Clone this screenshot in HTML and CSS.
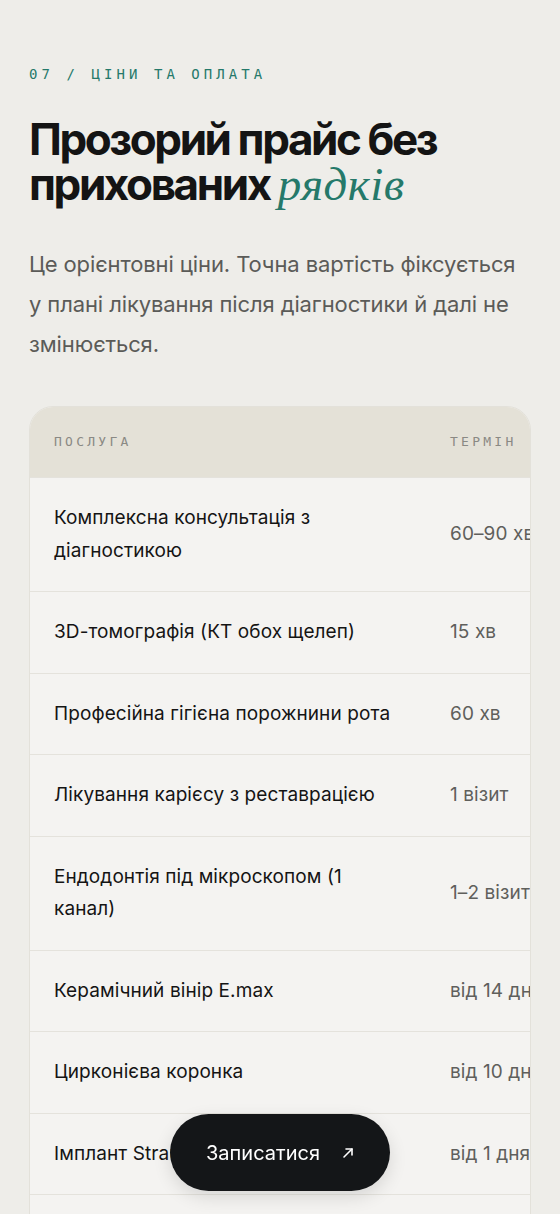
FILE: index.html
```html
<!DOCTYPE html>
<html lang="uk">
<head>
    <meta charset="UTF-8">
    <meta name="viewport" content="width=device-width, initial-scale=1.0">
    <title>Ціни та оплата</title>
    <link rel="stylesheet" href="styles.css">
</head>
<body>

    <section class="prices">
        <p class="eyebrow">07 / Ціни та оплата</p>
        <h2 class="title">Прозорий прайс без прихованих <em>рядків</em></h2>
        <p class="lead">Це орієнтовні ціни. Точна вартість фіксується у плані лікування після діагностики й далі не змінюється.</p>

        <div class="price-card">
            <table class="price-table">
                <thead>
                    <tr>
                        <th class="col-service">Послуга</th>
                        <th class="col-term">Термін</th>
                        <th class="col-price">Вартість</th>
                    </tr>
                </thead>
                <tbody>
                    <tr>
                        <td>Комплексна консультація з діагностикою</td>
                        <td class="term">60–90 хв</td>
                        <td class="price">1 200 ₴</td>
                    </tr>
                    <tr>
                        <td>3D-томографія (КТ обох щелеп)</td>
                        <td class="term">15 хв</td>
                        <td class="price">1 500 ₴</td>
                    </tr>
                    <tr>
                        <td>Професійна гігієна порожнини рота</td>
                        <td class="term">60 хв</td>
                        <td class="price">2 400 ₴</td>
                    </tr>
                    <tr>
                        <td>Лікування карієсу з реставрацією</td>
                        <td class="term">1 візит</td>
                        <td class="price">від 2 800 ₴</td>
                    </tr>
                    <tr>
                        <td>Ендодонтія під мікроскопом (1 канал)</td>
                        <td class="term">1–2 візити</td>
                        <td class="price">від 3 500 ₴</td>
                    </tr>
                    <tr>
                        <td>Керамічний вінір E.max</td>
                        <td class="term">від 14 днів</td>
                        <td class="price">від 16 000 ₴</td>
                    </tr>
                    <tr>
                        <td>Цирконієва коронка</td>
                        <td class="term">від 10 днів</td>
                        <td class="price">від 12 000 ₴</td>
                    </tr>
                    <tr>
                        <td>Імплант Straumann під ключ</td>
                        <td class="term">від 1 дня</td>
                        <td class="price">від 38 000 ₴</td>
                    </tr>
                    <tr>
                        <td>Відбілювання Philips Zoom</td>
                        <td class="term">90 хв</td>
                        <td class="price">8 500 ₴</td>
                    </tr>
                </tbody>
            </table>
        </div>
    </section>

    <a href="#" class="book-btn">
        Записатися
        <svg class="book-arrow" width="12" height="12" viewBox="0 0 12 12" fill="none" stroke="currentColor" stroke-width="1.6" stroke-linecap="round" stroke-linejoin="round">
            <path d="M2 10 L10 2"/>
            <path d="M4 2 H10 V8"/>
        </svg>
    </a>

</body>
</html>
```

FILE: styles.css
```css
/* styles.css */

body {
    margin: 0;
    background-color: #eeede9;
    font-family: Inter, "Noto Sans", sans-serif;
    color: #141414;
}

.prices {
    padding: 64px 29px 120px;
}

.eyebrow {
    margin: 0;
    font-family: "DejaVu Sans Mono", "Liberation Mono", monospace;
    font-size: 14px;
    line-height: 20px;
    letter-spacing: 0.29em;
    text-transform: uppercase;
    color: #25796a;
}

.title {
    margin: 33px 0 0;
    font-size: 44px;
    line-height: 45px;
    font-weight: 700;
    letter-spacing: -0.055em;
}

.title em {
    font-family: "Liberation Serif", "DejaVu Serif", serif;
    font-size: 47px;
    font-style: italic;
    font-weight: 400;
    letter-spacing: 0.01em;
    color: #25796a;
}

.lead {
    margin: 37px 0 0;
    font-size: 22px;
    line-height: 40px;
    letter-spacing: -0.005em;
    color: #5b5b58;
}

.price-card {
    margin-top: 42px;
    border: 1px solid #e3e1da;
    border-radius: 24px;
    background-color: #f4f3f1;
    overflow: hidden;
}

.price-table {
    width: 640px;
    border-collapse: collapse;
    table-layout: fixed;
}

.price-table th {
    padding: 27px 24px 28px;
    background-color: #e4e1d7;
    font-family: "DejaVu Sans Mono", "Liberation Mono", monospace;
    font-size: 13px;
    line-height: 15px;
    font-weight: 400;
    letter-spacing: 0.25em;
    text-transform: uppercase;
    text-align: left;
    color: #8a8984;
}

.col-service {
    width: 348px;
}

.col-term {
    width: 110px;
}

.price-table td {
    padding: 24px;
    border-top: 1px solid #e4e2dc;
    font-size: 19px;
    line-height: 32.5px;
    letter-spacing: 0.005em;
    vertical-align: middle;
}

.price-table .term,
.price-table .price {
    color: #5f5f5c;
    white-space: nowrap;
}

.book-btn {
    position: fixed;
    left: 170px;
    bottom: 23px;
    width: 220px;
    height: 77px;
    box-sizing: border-box;
    display: flex;
    align-items: center;
    justify-content: center;
    gap: 22px;
    border-radius: 40px;
    background-color: #141618;
    color: #ffffff;
    font-size: 20px;
    text-decoration: none;
    box-shadow: 0 6px 18px rgba(0, 0, 0, 0.12);
}

.book-arrow {
    margin-top: 1px;
}
```
